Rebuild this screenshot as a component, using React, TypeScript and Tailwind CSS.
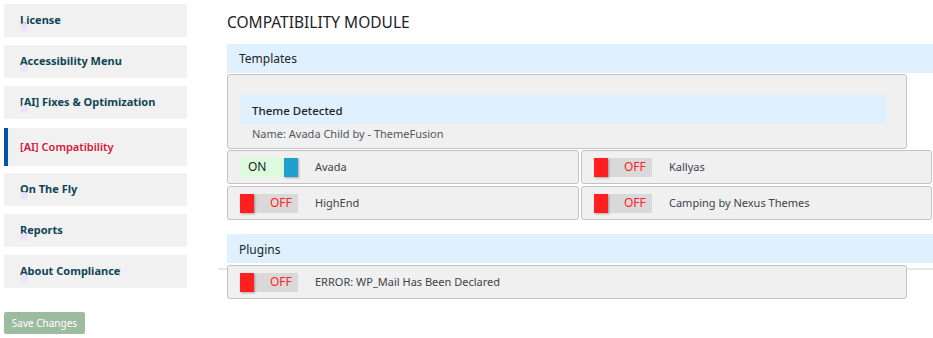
import React from "react";

const navItems = [
  { label: "License" },
  { label: "Accessibility Menu" },
  { label: "[AI] Fixes & Optimization" },
  { label: "[AI] Compatibility", active: true },
  { label: "On The Fly" },
  { label: "Reports" },
  { label: "About Compliance" },
];

const Toggle = ({ on }: { on: boolean }) => {
  if (on) {
    return (
      <div className="flex h-[19px] w-[58px] items-center bg-[#dcfadc]">
        <span className="flex-1 pl-[8px] text-[12px] leading-none text-[#1d2327]">ON</span>
        <span className="h-full w-[14px] bg-[#21a0d0] shadow-[1px_1px_2px_rgba(0,0,0,0.3)]" />
      </div>
    );
  }
  return (
    <div className="flex h-[19px] w-[58px] items-center bg-[#d9d9d9]">
      <span className="h-full w-[14px] bg-[#ff1f1f] shadow-[1px_1px_2px_rgba(0,0,0,0.3)]" />
      <span className="pl-[16px] text-[12px] leading-none text-[#ff1f1f]">OFF</span>
    </div>
  );
};

const ToggleRow = ({ on, label, className = "" }: { on: boolean; label: string; className?: string }) => (
  <div
    className={`flex h-[34px] items-center rounded-[3px] border border-[#c3c3c3] bg-[#f0f0f0] pl-[12px] ${className}`}
  >
    <Toggle on={on} />
    <span className="ml-[17px] text-[11px] text-[#3c434a]">{label}</span>
  </div>
);

export default function App() {
  return (
    <div
      className="flex min-h-[338px] w-[933px] bg-white"
      style={{ fontFamily: '"Noto Sans", "Open Sans", sans-serif' }}
    >
      {/* sidebar */}
      <div className="ml-[4px] mt-[4px] flex w-[183px] flex-col">
        {navItems.map((item, i) =>
          item.active ? (
            <div
              key={i}
              className="mb-[7px] mt-[1px] flex h-[38px] items-center border-l-[4px] border-[#0055a5] bg-[#f1f1f1] pl-[12px]"
            >
              <span className="text-[11px] font-semibold text-[#d9143a]">{item.label}</span>
            </div>
          ) : (
            <div key={i} className="relative mb-[8px] flex h-[33px] items-center bg-[#f1f1f1] pl-[16px]">
              <span className="text-[11px] font-bold text-[#0e4557]">{item.label}</span>
              <span className="absolute left-[16px] top-[19px] h-[8px] w-[8px] rounded-full bg-[#ede2fb]" />
            </div>
          )
        )}
        <button className="mt-[16px] h-[22px] w-[81px] rounded-[2px] bg-[#9dbb9f] text-[10px] text-white">
          Save Changes
        </button>
      </div>

      {/* main */}
      <div className="ml-[40px] flex flex-1 flex-col">
        <h1 className="mt-[11px] h-[33px] text-[15.5px] font-normal text-[#1d2327]">
          COMPATIBILITY MODULE
        </h1>

        <div className="flex h-[29px] items-center bg-[#dff0fe] pl-[12px] text-[12px] text-[#1d2327]">
          Templates
        </div>
        <div className="mt-[1px] h-[75px] w-[680px] rounded-[3px] border border-[#c3c3c3] bg-[#f0f0f0] px-[12px] pt-[20px]">
          <div className="flex h-[29px] w-[646px] items-center bg-[#dff0fe] pl-[12px] pt-[2px] text-[11.5px] font-medium text-[#1d2327]">
            Theme Detected
          </div>
          <div className="mt-[2px] pl-[12px] text-[11px] text-[#50575e]">Name: Avada Child by - ThemeFusion</div>
        </div>

        <div className="mt-[1px] grid grid-cols-[352px_351px] gap-x-[2px] gap-y-[2px]">
          <ToggleRow on label="Avada" />
          <ToggleRow on={false} label="Kallyas" />
          <ToggleRow on={false} label="HighEnd" />
          <ToggleRow on={false} label="Camping by Nexus Themes" />
        </div>

        <div className="mt-[14px] flex h-[29px] items-center bg-[#dff0fe] pl-[12px] pt-[2px] text-[12px] text-[#1d2327]">
          Plugins
        </div>
        <div className="relative mt-[2px]">
          <span className="absolute left-[-9px] right-0 top-[3px] h-[2px] bg-[#e8e8e8]" />
          <ToggleRow on={false} label="ERROR: WP_Mail Has Been Declared" className="relative w-[680px]" />
        </div>
      </div>
    </div>
  );
}
